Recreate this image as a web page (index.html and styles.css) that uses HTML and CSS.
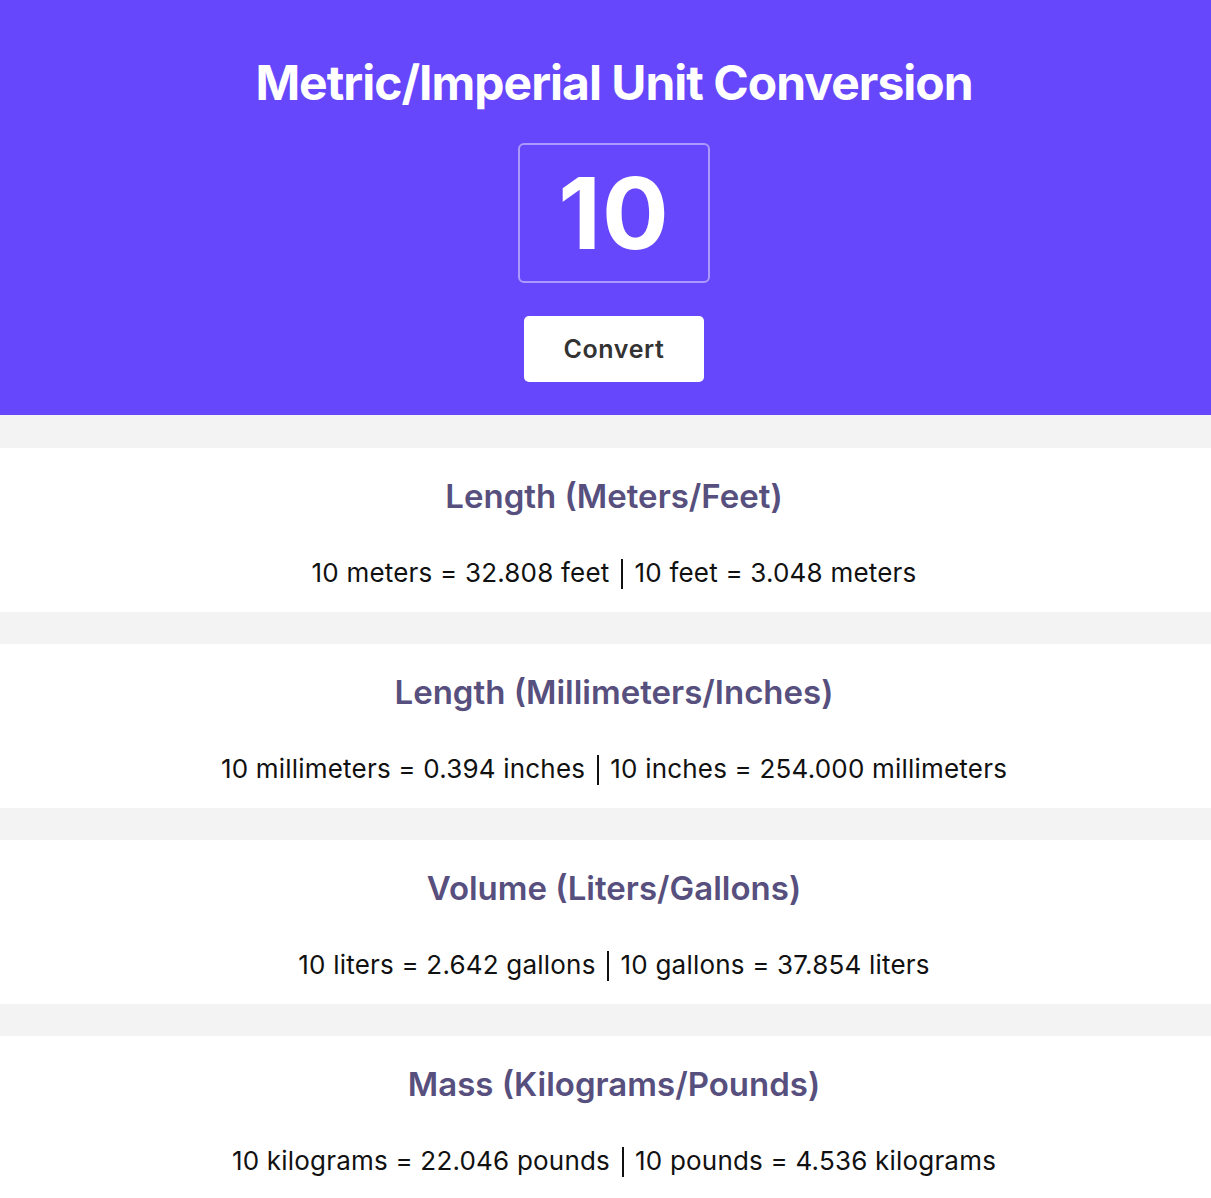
FILE: index.html
```html
<!DOCTYPE html>
<html lang="en">
<head>
<meta charset="utf-8">
<title>Metric/Imperial Unit Conversion</title>
<link rel="stylesheet" href="styles.css">
</head>
<body>
<header class="hero">
  <h1 class="hero-title">Metric/Imperial Unit Conversion</h1>
  <input class="hero-input" type="text" value="10">
  <button class="hero-button">Convert</button>
</header>
<main class="results">
  <section class="card">
    <h2 class="card-title">Length (Meters/Feet)</h2>
    <p class="card-text">10 meters = 32.808 feet <span class="sep"></span> 10 feet = 3.048 meters</p>
  </section>
  <section class="card">
    <h2 class="card-title">Length (Millimeters/Inches)</h2>
    <p class="card-text">10 millimeters = 0.394 inches <span class="sep"></span> 10 inches = 254.000 millimeters</p>
  </section>
  <section class="card">
    <h2 class="card-title">Volume (Liters/Gallons)</h2>
    <p class="card-text">10 liters = 2.642 gallons <span class="sep"></span> 10 gallons = 37.854 liters</p>
  </section>
  <section class="card">
    <h2 class="card-title">Mass (Kilograms/Pounds)</h2>
    <p class="card-text">10 kilograms = 22.046 pounds <span class="sep"></span> 10 pounds = 4.536 kilograms</p>
  </section>
</main>
</body>
</html>
```
FILE: styles.css
```css
* { box-sizing: border-box; }
body {
  margin: 0;
  background: #f3f3f3;
  font-family: Inter, "Liberation Sans", sans-serif;
}
.hero {
  background: #6747fb;
  display: flex;
  flex-direction: column;
  align-items: center;
  padding: 57px 0 33px 17px;
}
.hero-title {
  margin: 0;
  color: #fff;
  font-size: 48px;
  font-weight: 700;
  line-height: 52px;
  letter-spacing: -1px;
}
.hero-input {
  margin-top: 34px;
  width: 192px;
  height: 140px;
  background: transparent;
  border: 2px solid rgba(255,255,255,0.45);
  border-radius: 6px;
  color: #fff;
  font-family: inherit;
  font-size: 99px;
  font-weight: 700;
  letter-spacing: 1px;
  text-align: center;
  padding: 0;
  outline: none;
}
.hero-button {
  margin-top: 33px;
  width: 180px;
  height: 66px;
  background: #fff;
  border: none;
  border-radius: 5px;
  color: #333;
  font-family: inherit;
  font-size: 25px;
  font-weight: 600;
  letter-spacing: 0.6px;
}
.results {
  display: flex;
  flex-direction: column;
  gap: 32px;
  padding-top: 33px;
}
.card {
  background: #fff;
  height: 164px;
  display: flex;
  flex-direction: column;
  align-items: center;
  padding: 29px 0 0 17px;
}
.card-title {
  margin: 0;
  color: #574f7d;
  font-size: 33px;
  font-weight: 600;
  line-height: 39px;
}
.card-text {
  margin: 42px 0 0;
  color: #111;
  font-size: 26px;
  line-height: 29px;
  letter-spacing: 0.2px;
}
.sep {
  display: inline-block;
  width: 0;
  height: 30px;
  border-left: 2px solid #111;
  vertical-align: -7px;
  margin: 0 4px;
}
```
